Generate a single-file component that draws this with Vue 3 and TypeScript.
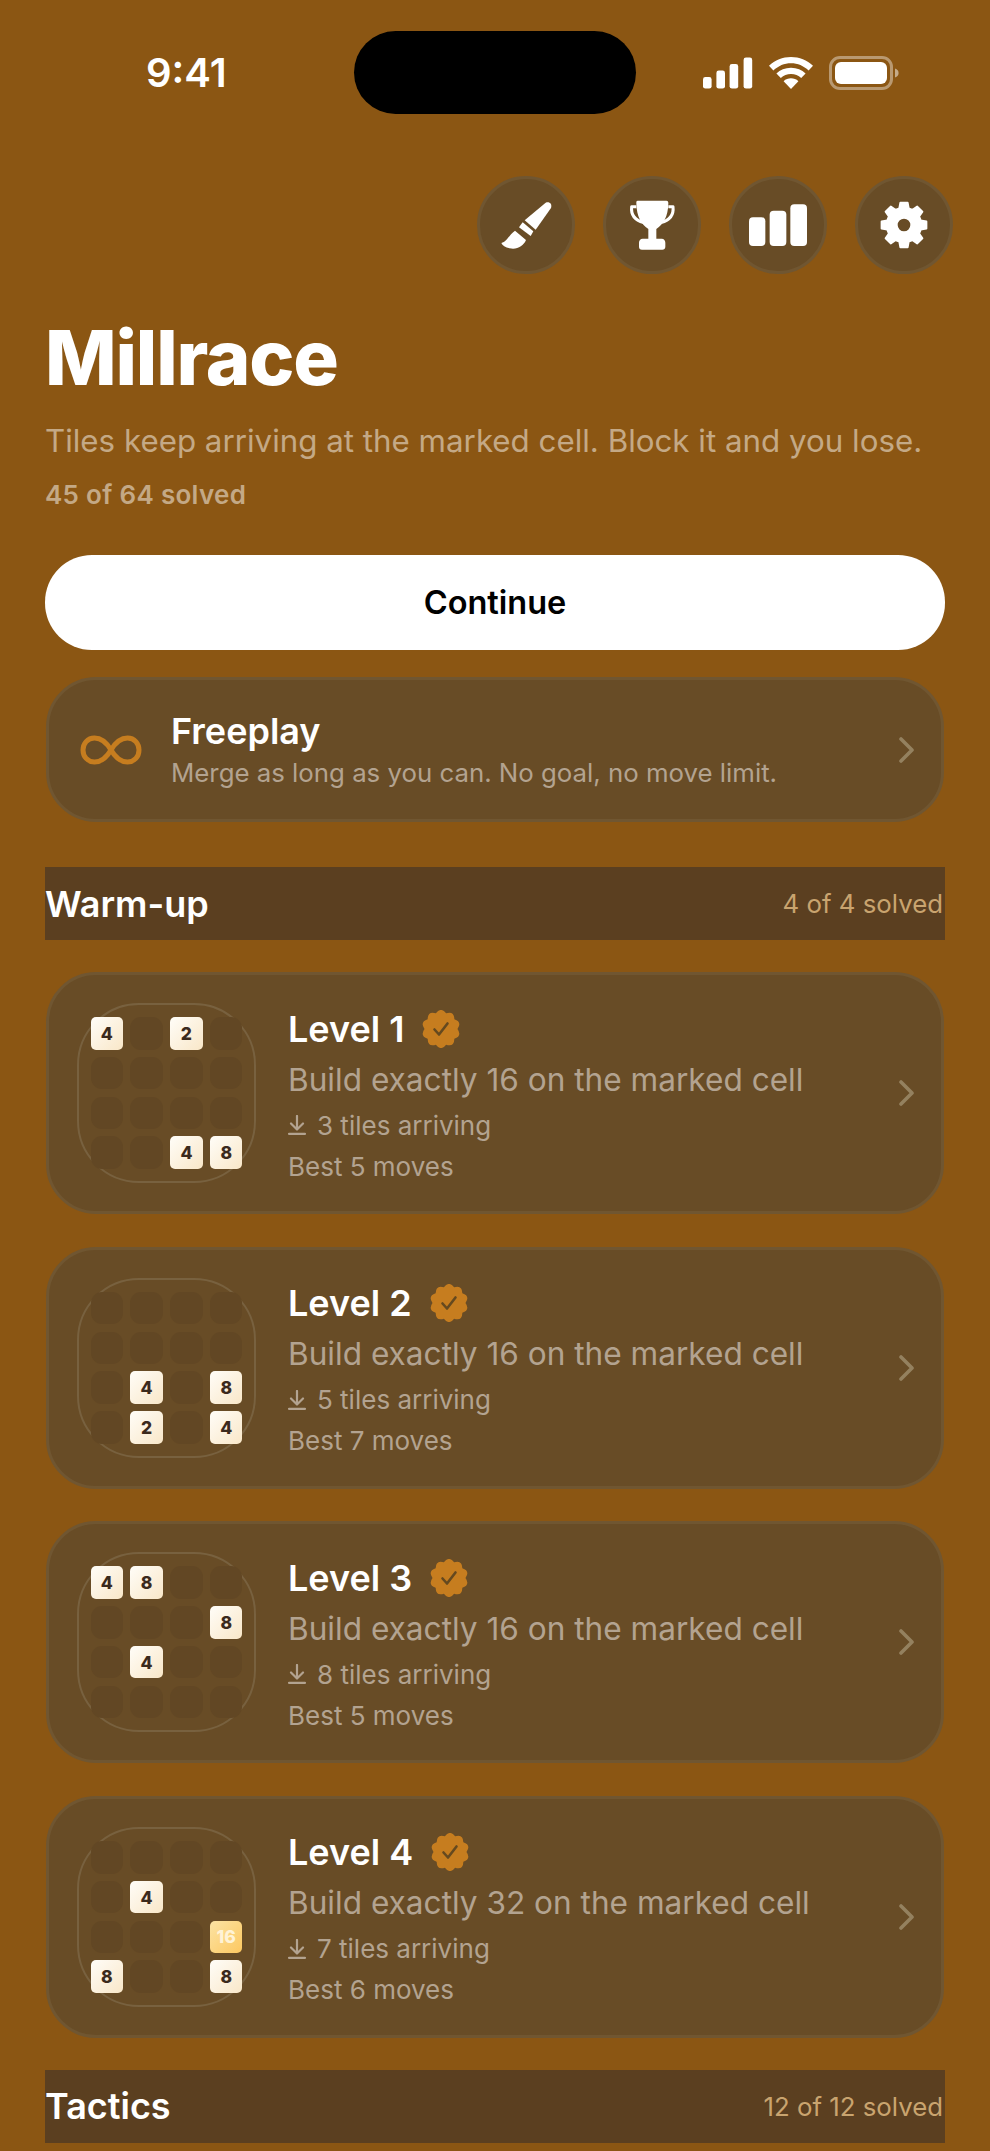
<script setup lang="ts">
interface Level {
  name: string
  goal: number
  arriving: number
  best: number
  tiles: Record<number, number>
}

const levels: Level[] = [
  { name: 'Level 1', goal: 16, arriving: 3, best: 5, tiles: { 0: 4, 2: 2, 14: 4, 15: 8 } },
  { name: 'Level 2', goal: 16, arriving: 5, best: 7, tiles: { 9: 4, 11: 8, 13: 2, 15: 4 } },
  { name: 'Level 3', goal: 16, arriving: 8, best: 5, tiles: { 0: 4, 1: 8, 7: 8, 9: 4 } },
  { name: 'Level 4', goal: 32, arriving: 7, best: 6, tiles: { 5: 4, 11: 16, 12: 8, 15: 8 } },
]

function gearPath(cx: number, cy: number, outer: number, inner: number, hole: number): string {
  const teeth = 8
  const pts: string[] = []
  for (let i = 0; i < teeth; i++) {
    const a = (i * 2 * Math.PI) / teeth - Math.PI / 2
    const w = 0.2
    const seq: [number, number][] = [
      [inner, a - w * 1.35],
      [outer, a - w * 0.8],
      [outer, a + w * 0.8],
      [inner, a + w * 1.35],
    ]
    for (const [r, t] of seq) {
      pts.push(`${(cx + r * Math.cos(t)).toFixed(1)} ${(cy + r * Math.sin(t)).toFixed(1)}`)
    }
  }
  const ring = `M${pts.join('L')}Z`
  const h = `M${cx - hole} ${cy}a${hole} ${hole} 0 1 0 ${hole * 2} 0a${hole} ${hole} 0 1 0 ${-hole * 2} 0Z`
  return ring + h
}

function sealPath(cx: number, cy: number, outer: number, inner: number, n: number): string {
  let d = ''
  for (let i = 0; i < n; i++) {
    const a = (i * 2 * Math.PI) / n - Math.PI / 2
    const b = ((i + 0.5) * 2 * Math.PI) / n - Math.PI / 2
    if (i === 0) {
      const s = a - Math.PI / n
      d += `M${(cx + inner * Math.cos(s)).toFixed(2)} ${(cy + inner * Math.sin(s)).toFixed(2)}`
    }
    d += `Q${(cx + outer * Math.cos(a)).toFixed(2)} ${(cy + outer * Math.sin(a)).toFixed(2)} ${(cx + inner * Math.cos(b)).toFixed(2)} ${(cy + inner * Math.sin(b)).toFixed(2)}`
  }
  return d + 'Z'
}

const gear = gearPath(1333, 195, 68, 52, 22)
const seal = sealPath(19, 19, 22.5, 16.5, 10)
</script>

<template>
  <main class="page">
    <div class="status">
      <span class="time">9:41</span>
      <div class="island"></div>
      <div class="status-icons">
        <svg width="50" height="32" viewBox="0 0 50 32">
          <rect x="0" y="20" width="8.6" height="11.6" rx="2.4" />
          <rect x="13.4" y="13.6" width="8.6" height="18" rx="2.4" />
          <rect x="26.6" y="7" width="8.6" height="24.6" rx="2.4" />
          <rect x="40.6" y="0.6" width="8.6" height="31" rx="2.4" />
        </svg>
        <svg width="44" height="32" viewBox="0 0 44 32">
          <path d="M22 32 14.6 24.2C18.6 20.4 25.4 20.4 29.4 24.2Z" />
          <path d="M22 10.8C28 10.8 32.8 13 36.6 16.4L32.2 21C29.4 18.4 26 17 22 17 18 17 14.6 18.4 11.8 21L7.4 16.4C11.2 13 16 10.8 22 10.8Z" />
          <path d="M22 0C30.4 0 38 3.2 44 8.8L39.6 13.4C34.6 8.8 28.8 6.2 22 6.2 15.2 6.2 9.4 8.8 4.4 13.4L0 8.8C6 3.2 13.6 0 22 0Z" />
        </svg>
        <svg width="70" height="34" viewBox="0 0 70 34">
          <rect x="1.5" y="1.5" width="61" height="31" rx="9.5" fill="none" stroke="#fff" stroke-opacity="0.4" stroke-width="3" />
          <rect x="6" y="6" width="52" height="22" rx="6" />
          <path d="M66 12.5c2.4.7 3.6 2.4 3.6 4.5S68.4 20.8 66 21.5Z" fill-opacity="0.5" />
        </svg>
      </div>
    </div>

    <nav class="tools">
      <button class="tool" aria-label="Themes">
        <svg viewBox="52 48 294 294">
          <path d="M258 128C270 124 278 132 274 144L228 209 195 181Z" />
          <path d="M189 187 221 214 213 228 178 202Z" />
          <path d="M125 249C141 246 147 226 166 212L199 240C191 259 171 270 150 265 137 262 128 256 125 249Z" />
        </svg>
      </button>
      <button class="tool" aria-label="Achievements">
        <svg viewBox="430 48 294 294">
          <path d="M534 122H620C625 122 626 125 626 130 625 170 612 192 590 207V236H606C613 236 617 241 617 248V260C617 266 613 269 608 269H547C541 269 538 266 538 260V248C538 241 542 236 549 236H566V207C544 192 531 170 530 130 530 125 530 122 534 122Z" />
          <path d="M530 140H516C513 165 527 181 552 188M626 140H640C643 165 629 181 604 188" fill="none" stroke="#fff" stroke-width="9" stroke-linejoin="round" />
        </svg>
      </button>
      <button class="tool" aria-label="Statistics">
        <svg viewBox="808 48 294 294">
          <rect x="868" y="172" width="49" height="86" rx="12" />
          <rect x="930" y="152" width="50" height="106" rx="12" />
          <rect x="992" y="133" width="50" height="125" rx="12" />
        </svg>
      </button>
      <button class="tool" aria-label="Settings">
        <svg viewBox="1186 48 294 294">
          <path :d="gear" fill-rule="evenodd" stroke="#fff" stroke-width="6" stroke-linejoin="round" />
        </svg>
      </button>
    </nav>

    <header class="intro">
      <h1>Millrace</h1>
      <p class="lede">Tiles keep arriving at the marked cell. Block it and you lose.</p>
      <p class="overall">45 of 64 solved</p>
    </header>

    <button class="continue">Continue</button>

    <section class="card freeplay">
      <svg class="infinity" width="62" height="30" viewBox="0 0 62 30" fill="none">
        <path d="M31 15C26 6.5 20.5 3 14.5 3 7.5 3 3 8.5 3 15S7.5 27 14.5 27C20.5 27 26 23.5 31 15 36 6.5 41.5 3 47.5 3 54.5 3 59 8.5 59 15S54.5 27 47.5 27C41.5 27 36 23.5 31 15Z" stroke="#c67d1f" stroke-width="5" />
      </svg>
      <div class="free-text">
        <h3>Freeplay</h3>
        <p>Merge as long as you can. No goal, no move limit.</p>
      </div>
      <svg class="chev" width="15" height="26" viewBox="0 0 15 26" fill="none">
        <path d="M2 2 13 13 2 24" />
      </svg>
    </section>

    <div class="band first">
      <h2>Warm-up</h2>
      <span>4 of 4 solved</span>
    </div>

    <section class="levels">
      <article v-for="level in levels" :key="level.name" class="card level">
        <div class="board">
          <div v-for="i in 16" :key="i" class="cell" :class="{ tile: level.tiles[i - 1], hot: level.tiles[i - 1] === 16 }">
            {{ level.tiles[i - 1] }}
          </div>
        </div>
        <div class="info">
          <div class="name">
            <h3>{{ level.name }}</h3>
            <svg width="38" height="38" viewBox="0 0 38 38" fill="none">
              <path :d="seal" fill="#c67d1f" />
              <path d="M12.5 19.5 17 24.5 25.5 13.5" stroke="#65491f" stroke-width="2.6" stroke-linecap="round" stroke-linejoin="round" />
            </svg>
          </div>
          <p class="goal">Build exactly {{ level.goal }} on the marked cell</p>
          <p class="meta arriving">
            <svg width="18" height="20" viewBox="0 0 18 20" fill="none">
              <path d="M9 1V14M3 8.5 9 14.5 15 8.5M1 18.8H17" />
            </svg>
            {{ level.arriving }} tiles arriving
          </p>
          <p class="meta">Best {{ level.best }} moves</p>
        </div>
        <svg class="chev" width="15" height="26" viewBox="0 0 15 26" fill="none">
          <path d="M2 2 13 13 2 24" />
        </svg>
      </article>
    </section>

    <div class="band second">
      <h2>Tactics</h2>
      <span>12 of 12 solved</span>
    </div>
  </main>
</template>

<style scoped>
.page {
  box-sizing: border-box;
  width: 990px;
  height: 2151px;
  overflow: hidden;
  padding: 0 45px;
  background: #8b5613;
  font-family: Inter, "Noto Sans", sans-serif;
  color: #fff;
}
h1, h2, h3, p { margin: 0; }
button { font-family: inherit; border: 0; padding: 0; }

.status {
  display: grid;
  grid-template-columns: 1fr 282px 1fr;
  align-items: center;
  height: 83px;
  padding-top: 31px;
}
.time {
  font-size: 40px;
  font-weight: 600;
  padding-left: 101px;
}
.island {
  height: 83px;
  background: #000;
  border-radius: 42px;
}
.status-icons {
  display: flex;
  justify-content: flex-end;
  align-items: center;
  gap: 16px;
  fill: #fff;
  margin-right: 46px;
}
.status-icons svg { flex: none; }

.tools {
  display: flex;
  justify-content: flex-end;
  gap: 28px;
  margin: 62px -8px 0 0;
}
.tool {
  width: 98px;
  height: 98px;
  border-radius: 50%;
  background: #684c26;
  border: 3px solid #705631;
  box-sizing: border-box;
  display: grid;
  place-items: center;
}
.tool svg {
  width: 98px;
  height: 98px;
  margin: -3px;
  fill: #fff;
}

.intro { margin-top: 37px; }
h1 {
  font-size: 76px;
  line-height: 92px;
  font-weight: 800;
  letter-spacing: -1.2px;
}
.lede {
  margin-top: 16px;
  font-size: 31.3px;
  line-height: 44px;
  color: #c4a986;
}
.overall {
  margin-top: 15px;
  font-size: 26px;
  line-height: 34px;
  font-weight: 600;
  letter-spacing: 0.3px;
  color: #c4a986;
}

.continue {
  display: block;
  width: 100%;
  height: 95px;
  margin-top: 43px;
  background: #fff;
  border-radius: 47px;
  font-size: 32.5px;
  font-weight: 600;
  color: #000;
}

.card {
  box-sizing: border-box;
  display: flex;
  align-items: center;
  margin: 0 1px;
  background: #684c26;
  border: 3px solid #705631;
  border-radius: 50px;
}
.freeplay {
  height: 145px;
  margin-top: 27px;
  padding: 0 27px 0 31px;
}
.infinity { flex: none; }
.free-text { flex: 1; margin-left: 29px; }
.free-text h3 {
  font-size: 36px;
  line-height: 44px;
  font-weight: 600;
}
.free-text p {
  margin-top: 3px;
  font-size: 25.8px;
  line-height: 34px;
  color: #b3a390;
}
.chev { flex: none; }
.chev path {
  stroke: #94815f;
  stroke-width: 3.6;
  stroke-linecap: round;
  stroke-linejoin: round;
}

.band {
  display: flex;
  justify-content: space-between;
  align-items: center;
  height: 73px;
  background: #5b3f20;
}
.band h2 {
  font-size: 36px;
  font-weight: 600;
}
.band span {
  font-size: 25.8px;
  color: #c9a46f;
  padding-right: 2px;
}
.first { margin-top: 45px; }
.second { margin-top: 32px; }

.levels {
  display: flex;
  flex-direction: column;
  gap: 32.67px;
  margin-top: 32px;
}
.level {
  height: 242px;
  padding: 0 27px 0 28px;
}
.board {
  flex: none;
  box-sizing: border-box;
  width: 179px;
  height: 180px;
  padding: 13px;
  border: 2.5px solid #78613f;
  border-radius: 62px;
  display: grid;
  grid-template-columns: repeat(4, 32.5px);
  grid-auto-rows: 32.5px;
  gap: 7.3px;
  justify-content: center;
  align-content: center;
}
.cell {
  border-radius: 11px;
  background: #624724;
  display: grid;
  place-items: center;
  font-size: 17.5px;
  font-weight: 800;
  color: #3b2a1d;
}
.tile {
  border-radius: 5px;
  background: linear-gradient(135deg, #fffdf8, #f9e7c8);
}
.hot {
  background: linear-gradient(135deg, #fbe3a4, #fdc860);
  color: #fff3d6;
}
.info { flex: 1; margin-left: 32px; padding-top: 5px; }
.name {
  display: flex;
  align-items: center;
  gap: 18px;
  height: 44px;
  margin-top: 2px;
}
.name h3 {
  font-size: 36px;
  font-weight: 600;
}
.goal {
  margin-top: 8px;
  font-size: 31.6px;
  line-height: 42px;
  color: #b3a390;
}
.meta {
  font-size: 26px;
  line-height: 41px;
  color: #b3a390;
}
.arriving {
  display: flex;
  align-items: center;
  gap: 11px;
  margin-top: 4px;
}
.arriving svg { stroke: #b3a390; stroke-width: 2.2; stroke-linecap: round; stroke-linejoin: round; }
</style>

<style>
html, body { background: #8b5613; }
</style>
